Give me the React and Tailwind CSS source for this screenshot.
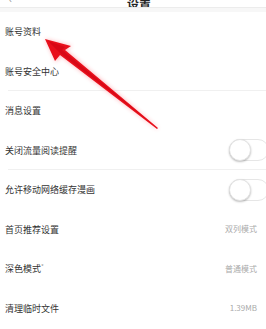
import React from 'react';

const Toggle = () => (
  <div className="relative h-[22px] w-[40px] -mr-[12px] rounded-full border border-[#e6e6e6] bg-white">
    <div className="absolute -left-px -top-px h-[22px] w-[22px] rounded-full bg-white shadow-[0_1px_2px_rgba(0,0,0,0.25)] border border-[#e2e2e2]" />
  </div>
);

const Row = ({ label, right, toggle, divider, sup }) => (
  <div className="relative flex h-[39.5px] items-center justify-between pl-[5px] pr-[9px]">
    <span className="text-[9px] text-[#333]">
      {label}
      {sup && <sup className="text-[6px] text-[#999]">*</sup>}
    </span>
    {right && <span className="text-[8px] text-[#aaa]">{right}</span>}
    {toggle && <Toggle />}
    {divider && <div className="absolute bottom-0 left-[8px] right-0 h-px bg-[#f0f0f0]" />}
  </div>
);

const Arrow = () => (
  <svg className="pointer-events-none absolute left-0 top-0" width="266" height="329" viewBox="0 0 266 329">
    <defs>
      <filter id="glow" x="-20%" y="-20%" width="140%" height="140%">
        <feGaussianBlur stdDeviation="2" />
      </filter>
    </defs>
    <g opacity="0.35" filter="url(#glow)">
      <path d="M45 39 L72 46 L66 50 L158 128 L157 129 L61 56 L56 62 Z" fill="#ff3040" />
    </g>
    <path d="M45 39 L71 46 L65 50 L158 128 L157 129 L60 55 L55 61 Z" fill="#e8101c" />
    <path d="M48 41 L65 47 L62 50 L150 122 L60 53 Z" fill="#c80010" opacity="0.5" />
  </svg>
);

export default function App() {
  return (
    <div
      className="relative h-[329px] w-[266px] overflow-hidden bg-white"
      style={{ fontFamily: '"Noto Sans CJK SC", "Noto Sans", sans-serif' }}
    >
      {/* header, cut off at the top */}
      <div className="relative flex h-[8px] items-end justify-center overflow-hidden border-b border-[#ececec]">
        <span className="absolute left-[9px] bottom-[3px] text-[10px] leading-none text-[#999]">‹</span>
        <span className="ml-[12px] text-[12px] font-bold leading-[12px] text-[#222] translate-y-[3px]">设置</span>
      </div>
      <div className="h-[4px] bg-[#f7f7f7]" />

      <Row label="账号资料" />
      <Row label="账号安全中心" divider />
      <Row label="消息设置" />
      <Row label="关闭流量阅读提醒" toggle divider />
      <Row label="允许移动网络缓存漫画" toggle />
      <Row label="首页推荐设置" right="双列模式" />
      <Row label="深色模式" sup right="普通模式" />
      <Row label="清理临时文件" right="1.39MB" />

      <Arrow />
    </div>
  );
}
